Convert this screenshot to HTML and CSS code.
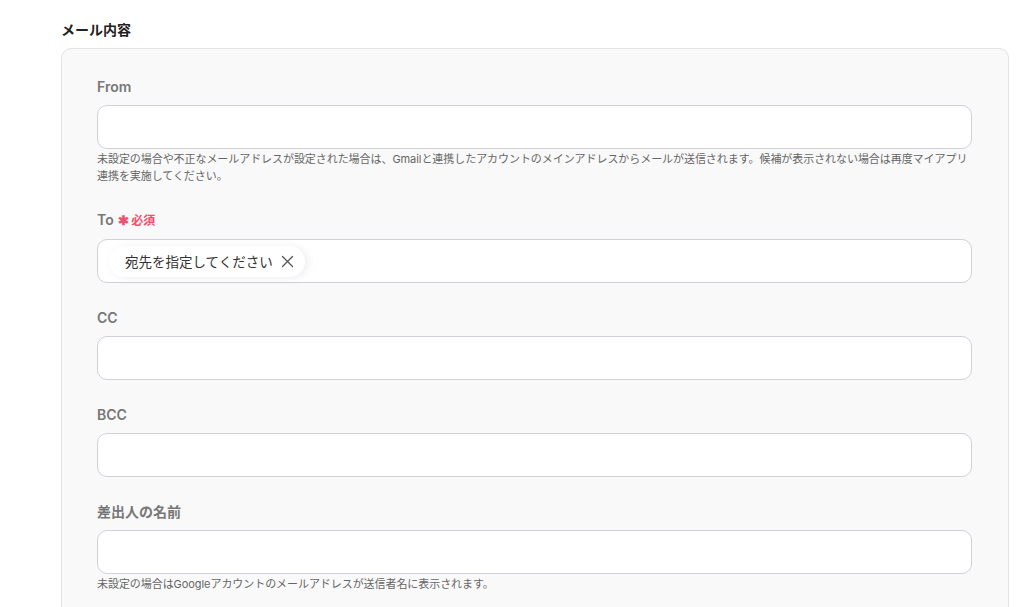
FILE: index.html
```html
<!DOCTYPE html>
<html>
<head>
    <meta charset="utf-8" />
    <title>メール内容</title>
    <link rel="stylesheet" href="styles.css">
</head>
<body>
    <div class="content">
        <h3 class="section-title">メール内容</h3>
        <div class="panel">
            <div class="field">
                <label class="field-label">From</label>
                <div class="field-input"></div>
                <p class="field-help">未設定の場合や不正なメールアドレスが設定された場合は、Gmailと連携したアカウントのメインアドレスからメールが送信されます。候補が表示されない場合は再度マイアプリ連携を実施してください。</p>
            </div>
            <div class="field">
                <label class="field-label">To <span class="required"><i>✱</i>必須</span></label>
                <div class="field-input">
                    <span class="chip">宛先を指定してください
                        <svg class="chip-close" width="13" height="13" viewBox="0 0 13 13"><path d="M1.5 1.5L11.5 11.5M11.5 1.5L1.5 11.5" stroke="#555" stroke-width="1.3" fill="none" stroke-linecap="round"/></svg>
                    </span>
                </div>
            </div>
            <div class="field">
                <label class="field-label">CC</label>
                <div class="field-input"></div>
            </div>
            <div class="field">
                <label class="field-label">BCC</label>
                <div class="field-input"></div>
            </div>
            <div class="field">
                <label class="field-label">差出人の名前</label>
                <div class="field-input"></div>
                <p class="field-help">未設定の場合はGoogleアカウントのメールアドレスが送信者名に表示されます。</p>
            </div>
        </div>
    </div>
</body>
</html>
```

FILE: styles.css
```css
* {
    margin: 0;
    padding: 0;
    box-sizing: border-box;
}

html, body {
    width: 100%;
    height: 100%;
    overflow: hidden;
}

body {
    background: #fff;
    font-family: Inter, "Noto Sans CJK JP", sans-serif;
    color: #222;
}

.content {
    padding: 20px 0 0 61px;
    width: 1009px;
}

.section-title {
    font-size: 14px;
    line-height: 20px;
    font-weight: 600;
    color: #222;
    margin-bottom: 8px;
}

.panel {
    background: #f9f9f9;
    border: 1px solid #e3e3e6;
    border-radius: 10px;
    padding: 28px 36px 40px 35px;
    min-height: 620px;
}

.field {
    margin-bottom: 25px;
}

.field-label {
    display: block;
    font-size: 14px;
    line-height: 20px;
    font-weight: 600;
    color: #777;
    margin-bottom: 8px;
}

.required {
    color: #f0506e;
    font-size: 12px;
    margin-left: 1px;
}

    .required i {
        font-style: normal;
        font-size: 13px;
        margin-right: 2px;
    }

.field-input {
    height: 44px;
    background: #fff;
    border: 1px solid #cfd0d9;
    border-radius: 10px;
    display: flex;
    align-items: center;
    padding-left: 11px;
}

.field-help {
    margin-top: 2px;
    font-size: 11px;
    line-height: 17px;
    letter-spacing: -0.06px;
    color: #666;
}

.chip {
    display: inline-flex;
    align-items: center;
    height: 31px;
    padding: 0 11px 0 16px;
    background: #fff;
    border-radius: 16px;
    font-size: 13.5px;
    color: #333;
    box-shadow: 3px 1px 8px rgba(0, 0, 0, 0.07);
}

.chip-close {
    margin-left: 8px;
}
```
